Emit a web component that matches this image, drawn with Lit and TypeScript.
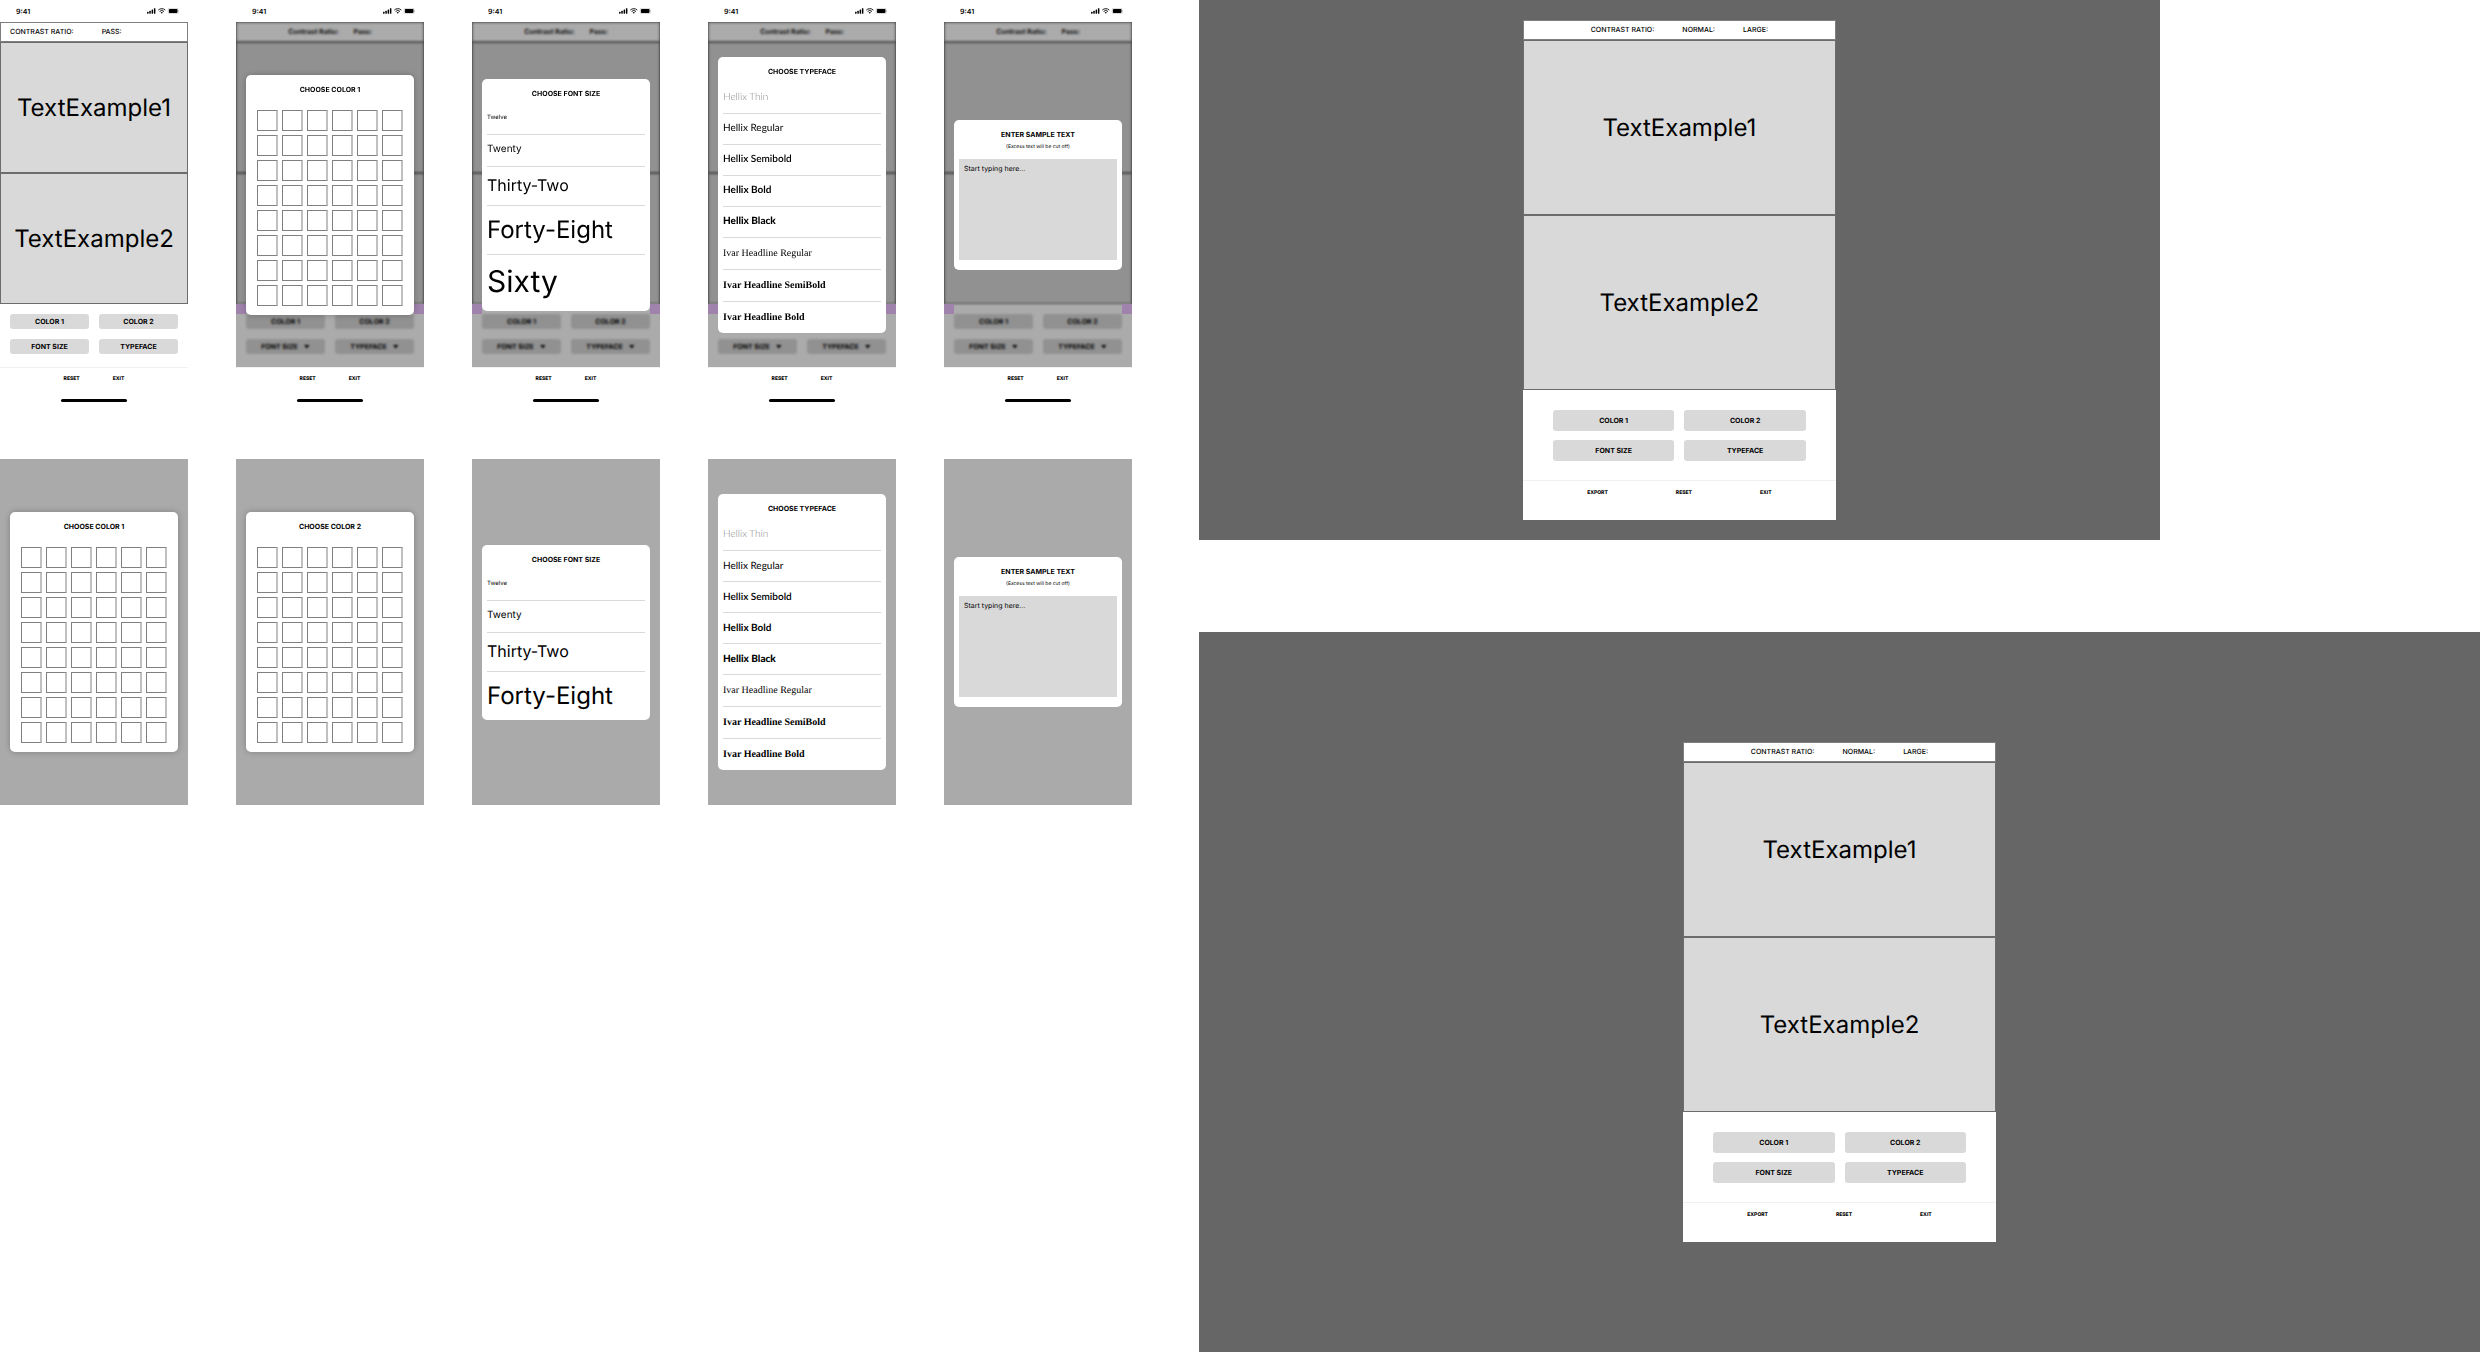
import { LitElement, html, css, nothing, svg } from "lit";
import { customElement, property } from "lit/decorators.js";

const base = css`
  *, *::before, *::after { box-sizing: border-box; }
  :host { font-family: Inter, "Liberation Sans", sans-serif; color: #000; text-rendering: geometricPrecision; }
  button { font: inherit; color: inherit; margin: 0; border: 0; padding: 0; background: none; cursor: pointer; text-rendering: inherit; }
`;

type Dialog = "" | "color1" | "color2" | "size" | "face" | "text";

const SIZES = [
  ["Twelve", "s12"],
  ["Twenty", "s20"],
  ["Thirty-Two", "s32"],
  ["Forty-Eight", "s48"],
  ["Sixty", "s60"],
];

const FACES = [
  ["Hellix Thin", "sans thin"],
  ["Hellix Regular", "sans"],
  ["Hellix Semibold", "sans semi"],
  ["Hellix Bold", "sans bold"],
  ["Hellix Black", "sans black"],
  ["Ivar Headline Regular", "ivar"],
  ["Ivar Headline SemiBold", "ivar semi"],
  ["Ivar Headline Bold", "ivar bold"],
];

/* A white dialog card: swatches, font sizes, typefaces or a text box. */
@customElement("picker-dialog")
class PickerDialog extends LitElement {
  @property() kind: Dialog = "color1";
  @property({ type: Number }) sizes = 5;

  static styles = [
    base,
    css`
      :host { display: block; width: 100%; }
      .card { margin: 0 10px; background: #fff; border-radius: 5px; overflow: hidden; }
      .card.raised { box-shadow: 0 0 6px rgba(0, 0, 0, 0.25); }
      .title { display: block; margin: 0; padding-top: 10px; height: 25px; font-size: 7px; line-height: 9px; font-weight: 700; text-align: center; }
      .title.tight { height: 24px; }
      .swatches { display: grid; grid-template-columns: repeat(6, 21px); gap: 4px; justify-content: center; padding: 10px 0 9px; }
      .swatch { height: 21px; background: #fff; border: 1px solid #808080; border-right: 2px solid #c0c0c0; }
      ul { list-style: none; margin: 0; padding: 0 5px; }
      li + li { border-top: 1px solid #d9d9d9; }
      .option { display: block; width: 100%; height: 31px; padding-bottom: 2px; text-align: left; white-space: nowrap; }
      li + li .option { height: 30px; }
      .s12 { height: 30px; font-size: 6px; }
      li + li .s20 { height: 31px; font-size: 10px; }
      li + li .s32 { height: 38px; font-size: 16px; }
      li + li .s48 { height: 48px; padding-bottom: 0; font-size: 24px; }
      li + li .s60 { height: 56px; font-size: 30px; }
      .sans { padding-bottom: 1px; font-family: Lato, Inter, sans-serif; font-size: 10px; }
      li + li .ivar { height: 31px; padding-bottom: 0; font-family: "Liberation Serif", serif; font-size: 10px; }
      .thin { font-weight: 300; color: #888; }
      .semi { font-weight: 600; }
      .bold { font-weight: 700; }
      .black { font-weight: 900; }
      .note { margin: 0; font-size: 5px; line-height: 6px; text-align: center; }
      .entry { display: block; width: calc(100% - 10px); height: 101px; margin: 9px 5px 10px; padding: 5px; border: 0; border-radius: 0; background: #d9d9d9; font-family: inherit; font-size: 7px; line-height: 9px; resize: none; color: #000; text-rendering: inherit; }
      .entry::placeholder { color: #000; opacity: 1; }
    `,
  ];

  private list(items: string[][]) {
    return html`<ul>
      ${items.map(([name, cls]) => html`<li><button class="option ${cls}" type="button">${name}</button></li>`)}
    </ul>`;
  }

  render() {
    switch (this.kind) {
      case "size":
        return html`<section class="card"><h2 class="title">CHOOSE FONT SIZE</h2>${this.list(SIZES.slice(0, this.sizes))}</section>`;
      case "face":
        return html`<section class="card"><h2 class="title">CHOOSE TYPEFACE</h2>${this.list(FACES)}</section>`;
      case "text":
        return html`<section class="card">
          <label class="title tight" for="sample">ENTER SAMPLE TEXT</label>
          <p class="note">(Excess text will be cut off)</p>
          <textarea class="entry" id="sample" placeholder="Start typing here..."></textarea>
        </section>`;
      default:
        return html`<section class="card raised">
          <h2 class="title">CHOOSE COLOR ${this.kind === "color2" ? "2" : "1"}</h2>
          <div class="swatches">
            ${Array.from({ length: 48 }, (_, i) => html`<button class="swatch" type="button" aria-label=${`Swatch ${i + 1}`}></button>`)}
          </div>
        </section>`;
    }
  }
}

/* The contrast checker: readout, two samples, four controls and a footer. */
@customElement("contrast-tool")
class ContrastTool extends LitElement {
  @property() dialog: Dialog = "";
  @property({ type: Boolean, reflect: true }) wide = false;

  static styles = [
    base,
    css`
      :host { display: block; background: #fff; }
      .status { display: flex; align-items: center; justify-content: space-between; height: 22px; padding: 0 9px 0 16px; font-size: 7px; font-weight: 600; line-height: 9px; }
      .icons { display: block; width: 32px; height: 6px; }
      .stage { position: relative; }
      .readout { display: flex; align-items: center; gap: 28px; height: 20px; padding: 0 9px; border: 1px solid rgba(0, 0, 0, 0.5); font-size: 7px; font-weight: 500; line-height: 8px; }
      .dimmed .readout { justify-content: center; gap: 15px; font-weight: 600; }
      .sample { display: flex; align-items: center; justify-content: center; height: 131px; border: 1px solid rgba(0, 0, 0, 0.5); background: #d9d9d9; font-size: 24px; line-height: 29px; }
      .controls { display: grid; grid-template-columns: 1fr 1fr; gap: 10px; padding: 10px 10px 13px; }
      .control { display: flex; align-items: center; justify-content: center; gap: 6px; height: 15px; border-radius: 3px; background: #d9d9d9; font-size: 7px; font-weight: 700; line-height: 8px; }
      .control.covered { visibility: hidden; }
      .caret { width: 6px; height: 4px; background: #000; clip-path: polygon(0 0, 100% 0, 50% 100%); }
      .veil { position: absolute; inset: 0; display: flex; align-items: center; background: rgba(0, 0, 0, 0.33); backdrop-filter: blur(1px); }
      .corner { position: absolute; top: 282px; width: 10px; height: 10px; background: #a083ad; }
      .corner.left { left: 0; }
      .corner.right { right: 0; }
      picker-dialog { position: relative; }
      .footer { display: flex; justify-content: center; gap: 33px; padding-top: 7px; border-top: 1px solid #f2f2f2; font-size: 5px; font-weight: 800; line-height: 8px; }
      .home { width: 66px; height: 3px; margin: 16px auto 4px; border-radius: 2px; background: #000; }

      :host([wide]) .readout { justify-content: center; }
      :host([wide]) .sample { height: 175px; }
      :host([wide]) .controls { padding: 20px 30px 19px; gap: 9px 10px; }
      :host([wide]) .control { height: 21px; }
      :host([wide]) .footer { gap: 68px; padding: 8px 0 23px; }
    `,
  ];

  private statusIcons() {
    return svg`<svg class="icons" viewBox="0 0 32 6" aria-hidden="true">
      <rect x="0" y="3.8" width="1.5" height="1.9" rx=".4"/><rect x="2.3" y="2.8" width="1.5" height="2.9" rx=".4"/>
      <rect x="4.6" y="1.6" width="1.5" height="4.1" rx=".4"/><rect x="6.9" y=".2" width="1.5" height="5.5" rx=".4"/>
      <path d="M11.3 2.1a5 5 0 0 1 7 0M12.6 3.5a3.1 3.1 0 0 1 4.4 0" fill="none" stroke="#000" stroke-width=".9"/>
      <path d="M13.7 4.6a1.6 1.6 0 0 1 2.2 0l-1.1 1.2z"/>
      <rect x="21.2" y=".3" width="10" height="5.4" rx="1.5" fill="none" stroke="#000" stroke-opacity=".35" stroke-width=".5"/>
      <rect x="21.9" y="1" width="8.6" height="4" rx=".9"/><path d="M31.5 2.2v1.6q.5-.2.5-.8t-.5-.8z" opacity=".4"/>
    </svg>`;
  }

  render() {
    const dimmed = this.dialog !== "";
    const readout = this.wide
      ? ["CONTRAST RATIO:", "NORMAL:", "LARGE:"]
      : dimmed ? ["Contrast Ratio:", "Pass:"] : ["CONTRAST RATIO:", "PASS:"];
    const caret = dimmed ? html`<span class="caret"></span>` : nothing;
    /* The typeface dialog is tall enough to lie over the whole first row of controls. */
    const covered = this.dialog === "face" ? "covered" : "";
    return html`
      ${this.wide ? nothing : html`<div class="status"><span>9:41</span>${this.statusIcons()}</div>`}
      <div class="stage ${dimmed ? "dimmed" : ""}">
        <div class="readout">${readout.map((t) => html`<span>${t}</span>`)}</div>
        <div class="sample">${dimmed ? nothing : "TextExample1"}</div>
        <div class="sample">${dimmed ? nothing : "TextExample2"}</div>
        <div class="controls">
          <button class="control ${covered}" type="button">COLOR 1</button>
          <button class="control ${covered}" type="button">COLOR 2</button>
          <button class="control" type="button">FONT SIZE${caret}</button>
          <button class="control" type="button">TYPEFACE${caret}</button>
        </div>
        ${dimmed
          ? html`<div class="veil">
              <span class="corner left"></span><span class="corner right"></span>
              <picker-dialog .kind=${this.dialog}></picker-dialog>
            </div>`
          : nothing}
      </div>
      <div class="footer">
        ${this.wide ? html`<button type="button">EXPORT</button>` : nothing}
        <button type="button">RESET</button>
        <button type="button">EXIT</button>
      </div>
      ${this.wide ? nothing : html`<div class="home"></div>`}
    `;
  }
}

@customElement("app-root")
class AppRoot extends LitElement {
  static styles = [
    base,
    css`
      :host { display: grid; grid-template-columns: minmax(0, 1199fr) minmax(0, 1281fr); min-height: 100vh; background: #fff; }
      .phones { display: grid; grid-template-columns: repeat(5, minmax(0, 1fr)); gap: 53px 48px; align-content: start; padding-right: 67px; }
      .backdrop { display: flex; align-items: center; min-height: 346px; background: #aaa; }
      .desks { display: flex; flex-direction: column; gap: 92px; }
      .desk { display: flex; align-items: center; justify-content: center; padding: 20px; background: #666; }
      .desk.small { width: 75%; }
      .desk.large { flex: 1; }
      .desk contrast-tool { width: 313px; }
    `,
  ];

  render() {
    const open: Dialog[] = ["", "color1", "size", "face", "text"];
    const loose: Dialog[] = ["color1", "color2", "size", "face", "text"];
    return html`
      <div class="phones">
        ${open.map((d) => html`<contrast-tool .dialog=${d}></contrast-tool>`)}
        ${loose.map((d) => html`<div class="backdrop"><picker-dialog .kind=${d} .sizes=${4}></picker-dialog></div>`)}
      </div>
      <div class="desks">
        <div class="desk small"><contrast-tool wide></contrast-tool></div>
        <div class="desk large"><contrast-tool wide></contrast-tool></div>
      </div>
    `;
  }
}
